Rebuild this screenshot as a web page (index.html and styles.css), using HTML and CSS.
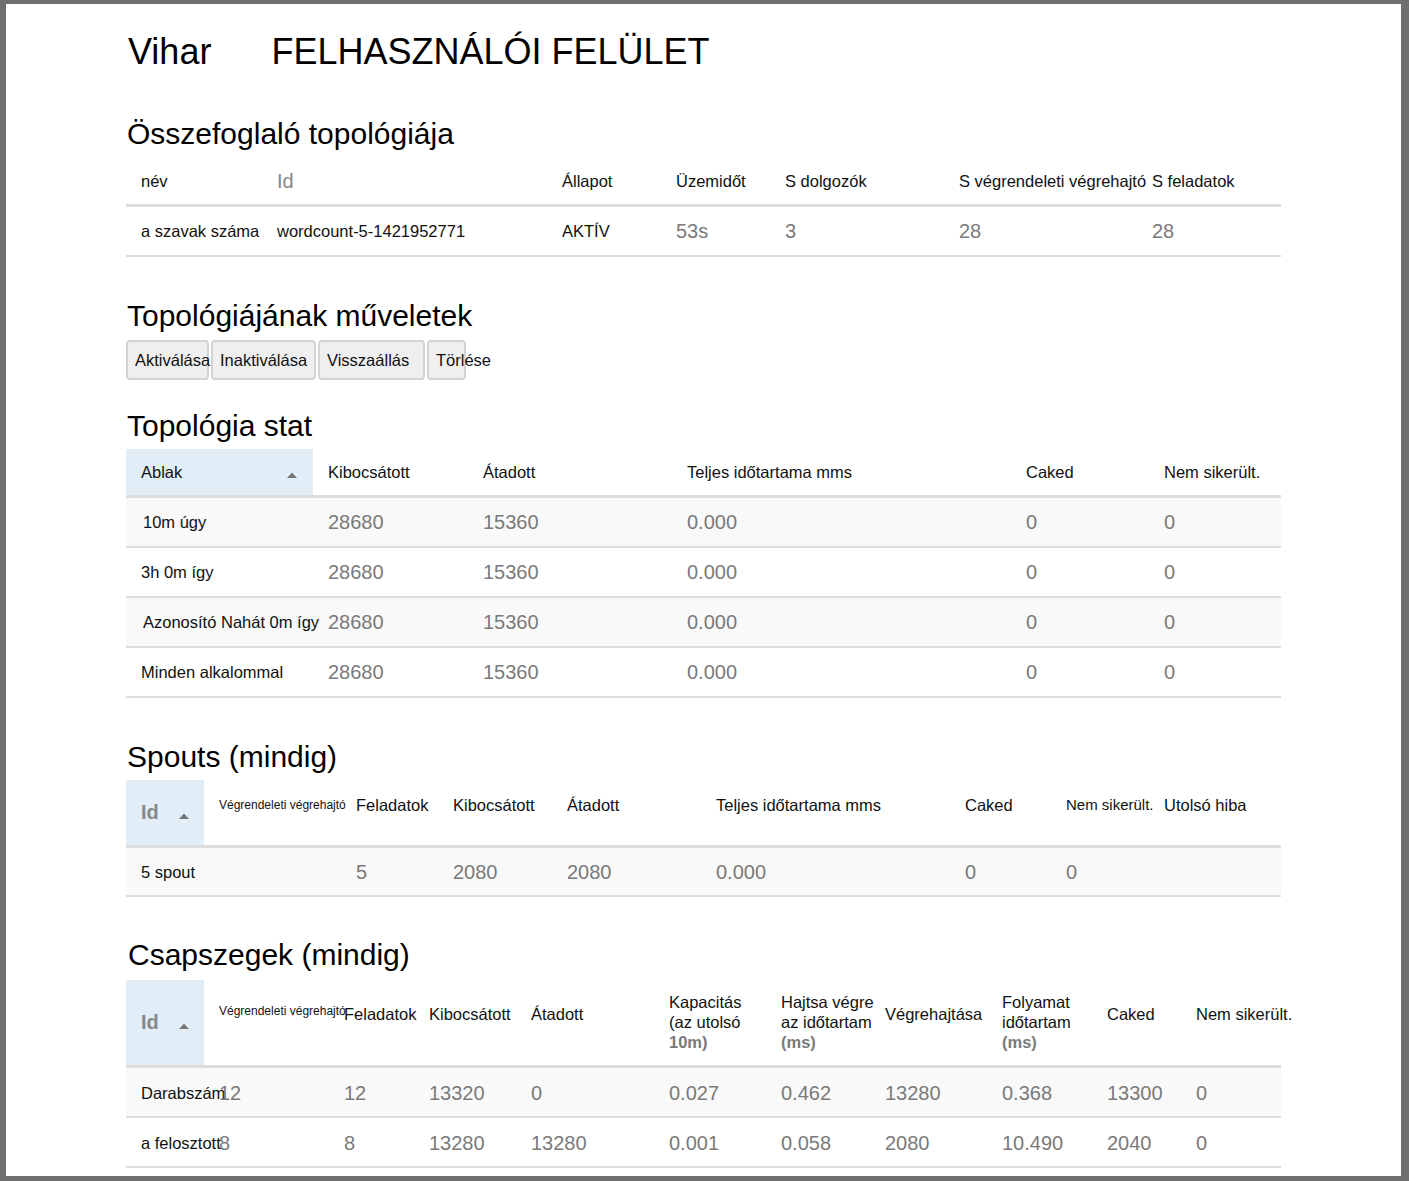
FILE: index.html
```html
<!DOCTYPE html>
<html lang="hu">
<head>
<meta charset="utf-8">
<title>Vihar FELHASZNÁLÓI FELÜLET</title>
<link rel="stylesheet" href="styles.css">
</head>
<body>
<div class="frame">
  <main class="page">
    <header class="title"><span class="brand">Vihar</span><span class="ui">FELHASZNÁLÓI FELÜLET</span></header>

    <h2 class="h-summary">Összefoglaló topológiája</h2>
    <table class="tbl summary">
      <colgroup><col><col><col><col><col><col><col></colgroup>
      <thead>
        <tr><th>név</th><th class="idh">Id</th><th>Állapot</th><th>Üzemidőt</th><th>S dolgozók</th><th>S végrendeleti végrehajtó</th><th>S feladatok</th></tr>
      </thead>
      <tbody>
        <tr><td>a szavak száma</td><td>wordcount-5-1421952771</td><td>AKTÍV</td><td class="num">53s</td><td class="num">3</td><td class="num">28</td><td class="num">28</td></tr>
      </tbody>
    </table>

    <h2 class="h-ops">Topológiájának műveletek</h2>
    <div class="actions">
      <button class="btn b-activate">Aktiválása</button>
      <button class="btn b-deactivate">Inaktiválása</button>
      <button class="btn b-rebalance">Visszaállás</button>
      <button class="btn b-kill">Törlése</button>
    </div>

    <h2 class="h-stat">Topológia stat</h2>
    <table class="tbl stat">
      <colgroup><col><col><col><col><col><col></colgroup>
      <thead>
        <tr>
          <th class="sorted"><div class="thflex spread"><span>Ablak</span><svg class="caret" width="10" height="6" viewBox="0 0 10 6"><path d="M0 6 L5 0.5 L10 6 Z" fill="#777"/></svg></div></th>
          <th>Kibocsátott</th><th>Átadott</th><th>Teljes időtartama mms</th><th>Caked</th><th>Nem sikerült.</th>
        </tr>
      </thead>
      <tbody>
        <tr class="odd"><td class="lbl2">10m úgy</td><td class="num">28680</td><td class="num">15360</td><td class="num">0.000</td><td class="num">0</td><td class="num">0</td></tr>
        <tr><td>3h 0m így</td><td class="num">28680</td><td class="num">15360</td><td class="num">0.000</td><td class="num">0</td><td class="num">0</td></tr>
        <tr class="odd"><td class="lbl2">Azonosító Nahát 0m így</td><td class="num">28680</td><td class="num">15360</td><td class="num">0.000</td><td class="num">0</td><td class="num">0</td></tr>
        <tr><td>Minden alkalommal</td><td class="num">28680</td><td class="num">15360</td><td class="num">0.000</td><td class="num">0</td><td class="num">0</td></tr>
      </tbody>
    </table>

    <h2 class="h-spouts">Spouts (mindig)</h2>
    <table class="tbl spouts">
      <colgroup><col><col><col><col><col><col><col><col><col></colgroup>
      <thead>
        <tr>
          <th class="sorted idcell"><div class="thflex"><span class="idbold">Id</span><svg class="caret down" width="10" height="6" viewBox="0 0 10 6"><path d="M0 6 L5 0.5 L10 6 Z" fill="#777"/></svg></div></th>
          <th class="sub tiny">Végrendeleti végrehajtó</th>
          <th class="sub">Feladatok</th>
          <th class="sub">Kibocsátott</th>
          <th class="sub">Átadott</th>
          <th class="sub">Teljes időtartama mms</th>
          <th class="sub">Caked</th>
          <th class="sub small">Nem sikerült.</th>
          <th class="sub">Utolsó hiba</th>
        </tr>
      </thead>
      <tbody>
        <tr class="odd"><td>5 spout</td><td></td><td class="num">5</td><td class="num">2080</td><td class="num">2080</td><td class="num">0.000</td><td class="num">0</td><td class="num">0</td><td></td></tr>
      </tbody>
    </table>

    <h2 class="h-bolts">Csapszegek (mindig)</h2>
    <table class="tbl bolts">
      <colgroup><col><col><col><col><col><col><col><col><col><col><col></colgroup>
      <thead>
        <tr>
          <th class="sorted idcell"><div class="thflex"><span class="idbold">Id</span><svg class="caret down" width="10" height="6" viewBox="0 0 10 6"><path d="M0 6 L5 0.5 L10 6 Z" fill="#777"/></svg></div></th>
          <th class="sub tiny">Végrendeleti végrehajtó</th>
          <th class="sub">Feladatok</th>
          <th class="sub">Kibocsátott</th>
          <th class="sub">Átadott</th>
          <th class="multi">Kapacitás<br>(az utolsó<br><span class="em">10m)</span></th>
          <th class="multi">Hajtsa végre<br>az időtartam<br><span class="em">(ms)</span></th>
          <th class="sub">Végrehajtása</th>
          <th class="multi">Folyamat<br>időtartam<br><span class="em">(ms)</span></th>
          <th class="sub">Caked</th>
          <th class="sub">Nem sikerült.</th>
        </tr>
      </thead>
      <tbody>
        <tr class="odd"><td>Darabszám</td><td class="num">12</td><td class="num">12</td><td class="num">13320</td><td class="num">0</td><td class="num">0.027</td><td class="num">0.462</td><td class="num">13280</td><td class="num">0.368</td><td class="num">13300</td><td class="num">0</td></tr>
        <tr><td>a felosztott</td><td class="num">8</td><td class="num">8</td><td class="num">13280</td><td class="num">13280</td><td class="num">0.001</td><td class="num">0.058</td><td class="num">2080</td><td class="num">10.490</td><td class="num">2040</td><td class="num">0</td></tr>
      </tbody>
    </table>
  </main>
</div>
</body>
</html>
```

FILE: styles.css
```css
* { box-sizing: border-box; }

html, body { margin: 0; padding: 0; }

body {
  font-family: "Liberation Sans", Arial, sans-serif;
  color: #111;
  background: #fff;
}

.frame {
  height: 100vh;
  border-style: solid;
  border-color: #6f6f6f;
  border-width: 4px 8px 5px 6px;
  overflow: hidden;
  background: #fff;
}

.page {
  padding-left: 120px;
}

.title {
  display: flex;
  gap: 60px;
  margin: 28px 0 0 2px;
  font-size: 36px;
  line-height: 40px;
  color: #000;
}

h2 {
  margin: 0;
  padding-left: 1px;
  font-size: 30px;
  line-height: 34px;
  font-weight: normal;
  color: #000;
}

.h-summary { margin-top: 45px; }
.h-ops { margin-top: 42px; }
.h-stat { margin-top: 29px; }
.h-spouts { margin-top: 42px; }
.h-bolts { margin-top: 41px; padding-left: 2px; }

/* tables */
.tbl {
  width: 1155px;
  table-layout: fixed;
  border-collapse: separate;
  border-spacing: 0;
}

.tbl th,
.tbl td {
  padding: 0 0 0 15px;
  text-align: left;
  font-weight: normal;
  font-size: 16.5px;
  white-space: nowrap;
  vertical-align: middle;
  overflow: visible;
  color: #111;
}

.tbl th { border-bottom: 3px solid #ddd; line-height: 22px; }
.tbl td { border-bottom: 2px solid #ddd; line-height: 23px; padding-top: 13px; padding-bottom: 12px; }

.tbl .num { font-size: 20px; color: #7a7a7a; }

.tbl tr.odd td { background: #f9f9f9; }

.sorted { background: #e1edf7; }

.thflex { display: flex; align-items: center; }
.thflex.spread { justify-content: space-between; padding-right: 16px; }
.caret { display: block; margin-top: 6px; }
.caret.down { margin-left: 20px; margin-top: 8px; }

.idbold { font-size: 20px; font-weight: bold; color: #888; }

/* summary */
.summary { margin-top: 8px; }
.summary th { padding-top: 11px; padding-bottom: 12px; }
.summary .idh { font-size: 20px; color: #888; }
.summary col:nth-child(1) { width: 136px; }
.summary col:nth-child(2) { width: 285px; }
.summary col:nth-child(3) { width: 114px; }
.summary col:nth-child(4) { width: 109px; }
.summary col:nth-child(5) { width: 174px; }
.summary col:nth-child(6) { width: 193px; }
.summary col:nth-child(7) { width: 144px; }

/* actions */
.actions {
  display: flex;
  gap: 2px;
  margin-top: 7px;
}

.btn {
  height: 40px;
  padding: 0 0 0 7px;
  font-family: "Liberation Sans", Arial, sans-serif;
  font-size: 16.5px;
  line-height: 36px;
  color: #111;
  background: #efefef;
  border: 2px solid #d3d3d3;
  border-radius: 4px;
  text-align: left;
  white-space: nowrap;
  overflow: visible;
}

.b-activate { width: 83px; }
.b-deactivate { width: 105px; }
.b-rebalance { width: 107px; }
.b-kill { width: 39px; }

/* topology stat */
.stat { margin-top: 6px; }
.stat th { padding-top: 12px; padding-bottom: 12px; }
.stat .lbl2 { padding-left: 17px; }
.stat col:nth-child(1) { width: 187px; }
.stat col:nth-child(2) { width: 155px; }
.stat col:nth-child(3) { width: 204px; }
.stat col:nth-child(4) { width: 339px; }
.stat col:nth-child(5) { width: 138px; }
.stat col:nth-child(6) { width: 132px; }

/* spouts */
.spouts { margin-top: 6px; }
.spouts th.idcell { padding-top: 21px; padding-bottom: 22px; }
.spouts th.sub { padding-top: 0; padding-bottom: 16px; }
.spouts td { padding-top: 13px; padding-bottom: 11px; }
.tbl th.tiny { font-size: 12px; }
.tbl th.small { font-size: 15px; }
.spouts col:nth-child(1) { width: 78px; }
.spouts col:nth-child(2) { width: 137px; }
.spouts col:nth-child(3) { width: 97px; }
.spouts col:nth-child(4) { width: 114px; }
.spouts col:nth-child(5) { width: 149px; }
.spouts col:nth-child(6) { width: 249px; }
.spouts col:nth-child(7) { width: 101px; }
.spouts col:nth-child(8) { width: 98px; }
.spouts col:nth-child(9) { width: 132px; }

/* bolts */
.bolts { margin-top: 8px; }
.bolts th.idcell { padding-top: 31px; padding-bottom: 32px; }
.bolts th.sub { padding-top: 0; padding-bottom: 18px; }
.bolts th.tiny { padding-bottom: 24px; }
.bolts th.multi { padding-top: 12px; padding-bottom: 13px; line-height: 20px; white-space: nowrap; }
.bolts td { padding-top: 14px; padding-bottom: 11px; }
.bolts .em { font-weight: bold; color: #7a7a7a; }
.bolts col:nth-child(1) { width: 78px; }
.bolts col:nth-child(2) { width: 125px; }
.bolts col:nth-child(3) { width: 85px; }
.bolts col:nth-child(4) { width: 102px; }
.bolts col:nth-child(5) { width: 138px; }
.bolts col:nth-child(6) { width: 112px; }
.bolts col:nth-child(7) { width: 104px; }
.bolts col:nth-child(8) { width: 117px; }
.bolts col:nth-child(9) { width: 105px; }
.bolts col:nth-child(10) { width: 89px; }
.bolts col:nth-child(11) { width: 100px; }
```
